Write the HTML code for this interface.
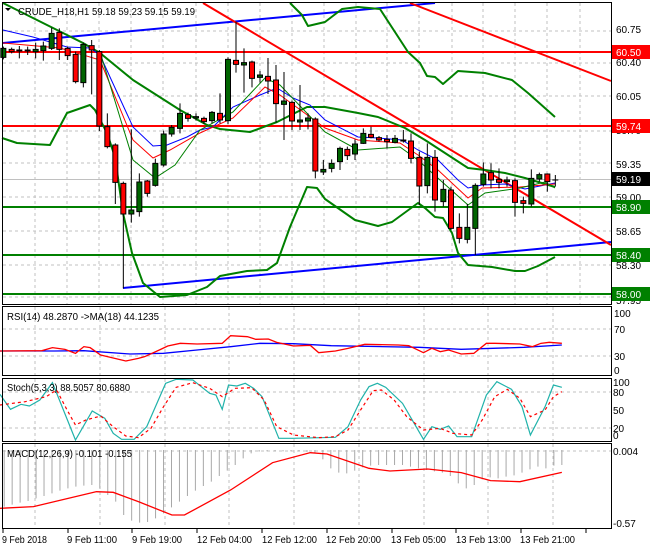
<!DOCTYPE html>
<html><head><meta charset="utf-8"><style>
html,body{margin:0;padding:0;background:#fff;width:650px;height:550px;overflow:hidden}
svg{display:block}
text{font-family:"Liberation Sans",sans-serif;font-size:10px;fill:#000}
.ns{vector-effect:non-scaling-stroke}
</style></head><body>
<svg width="650" height="550" viewBox="0 0 650 550" xmlns="http://www.w3.org/2000/svg">
<rect x="0" y="0" width="650" height="550" fill="#fff"/>
<g stroke="#c0c0c0" stroke-dasharray="3,3" stroke-width="1" fill="none">
<path d="M3 31H611M3 63H611M3 96H611M3 131H611M3 163H611M3 197H611M3 231H611M3 265H611M3 297H611"/>
<path d="M35 3V304M67 3V304M99 3V304M131 3V304M163 3V304M196 3V304M228 3V304M260 3V304M292 3V304M324 3V304M356 3V304M387 3V304M419 3V304M452 3V304M483 3V304M515 3V304M547 3V304M580 3V304"/>
<path d="M3 329H611M3 356H611M3 392H611M3 428H611M3 451H611"/>
<path d="M35 307V376M100 307V376M165 307V376M229 307V376M294 307V376M359 307V376M424 307V376M488 307V376M553 307V376"/>
<path d="M35 379V441M100 379V441M165 379V441M229 379V441M294 379V441M359 379V441M424 379V441M488 379V441M553 379V441"/>
<path d="M35 444V528M100 444V528M165 444V528M229 444V528M294 444V528M359 444V528M424 444V528M488 444V528M553 444V528"/>
</g>
<line x1="3" y1="179.5" x2="611" y2="179.5" stroke="#c0c0c0"/>
<g stroke-width="2" fill="none">
<path d="M3 52H611M3 126H611" stroke="#ff0000"/>
<path d="M3 207H611M3 255H611M3 294H611" stroke="#008000"/>
</g>
<g stroke-width="2" fill="none">
<path d="M3 43L435 3" stroke="#0000ff"/>
<path d="M123 288L611 242" stroke="#0000ff"/>
<path d="M203 3L611 245" stroke="#ff0000"/>
<path d="M410 3L611 81" stroke="#ff0000"/>
</g>
<g stroke="#008000" stroke-width="2" fill="none" stroke-linejoin="round">
<path d="M3 3L43 23L83 43L100 53L133 80L180 110L207 125L220 129L250 132L277 122L307 107L325 107L358 113L378 117L405 128L425 140L468 168L485 170L505 173L525 178L555 187"/>
<path d="M2 138L17 143L50 145L67 113L90 105L95 110L107 133L115 157L123 213L132 253L143 283L160 297L187 295L207 287L220 276L247 271L267 270L277 263L290 227L307 187L317 188L325 199L355 220L378 226L392 222L418 203L425 208L435 217L443 218L452 233L458 253L468 265L492 267L515 271L525 271L538 266L555 257"/>
<path d="M290 3L302 15L308 26L325 22L342 9L358 7L380 9L408 52L420 63L427 76L435 77L443 84L458 71L485 73L512 80L528 93L555 117"/>
</g>
<g fill="none" stroke-width="1">
<path stroke="#0000ff" d="M3 30L33 37L67 47L90 48L100 55L110 77L133 127L153 146L167 145L187 137L200 130L213 127L233 107L260 95L277 88L293 98L310 105L325 120L358 137L378 138L402 140L418 150L438 160L458 180L468 188L482 185L505 184L525 189L555 183"/>
<path stroke="#ff0000" d="M3 43L60 48L100 60L133 140L153 158L170 150L200 133L233 118L265 87L280 95L325 128L358 140L400 143L418 155L438 170L468 198L482 188L520 187L555 184"/>
<path stroke="#008000" d="M100 52L133 160L155 178L175 165L200 130L233 112L265 78L280 85L325 132L358 150L400 147L418 160L440 180L468 205L485 193L520 188L545 182L555 188"/>
</g>
<g transform="scale(0.33333)">
<path class="ns" stroke="#000" stroke-width="1" fill="none" d="M10 140V178M35 143V160M58 138V175M83 140V165M107 128V175M130 125V182M155 83V150M178 85V180M203 140V180M227 155V250M250 128V262M275 120V283M298 150V393M322 340V445M346 430V612M370 545V865M394 388V668M418 520V650M442 540V590M466 476V560M491 392V500M515 375V410M540 310V400M564 338V365M588 340V362M612 350V372M636 333V370M660 280V370M684 172V372M708 65V218M732 145V278M756 182V262M780 213V248M804 174V282M828 195V368M852 216V420M876 302V390M900 255V390M924 340V388M946 352V535M970 480V525"/>
<g stroke="#000" stroke-width="1">
<rect class="ns" x="2.5" y="145" width="15" height="27" fill="#006400"/>
<rect class="ns" x="27.5" y="148" width="15" height="7" fill="#ff0000"/>
<rect class="ns" x="50.5" y="150" width="15" height="3" fill="#006400"/>
<rect class="ns" x="75.5" y="150" width="15" height="3" fill="#006400"/>
<rect class="ns" x="99.5" y="148" width="15" height="7" fill="#006400"/>
<rect class="ns" x="122.5" y="138" width="15" height="14" fill="#006400"/>
<rect class="ns" x="147.5" y="100" width="15" height="45" fill="#006400"/>
<rect class="ns" x="170.5" y="97" width="15" height="51" fill="#ff0000"/>
<rect class="ns" x="195.5" y="145" width="15" height="22" fill="#ff0000"/>
<rect class="ns" x="219.5" y="163" width="15" height="82" fill="#ff0000"/>
<rect class="ns" x="242.5" y="133" width="15" height="115" fill="#006400"/>
<rect class="ns" x="267.5" y="137" width="15" height="13" fill="#ff0000"/>
<rect class="ns" x="290.5" y="155" width="15" height="223" fill="#ff0000"/>
<rect class="ns" x="314.5" y="380" width="15" height="60" fill="#ff0000"/>
<rect class="ns" x="338.5" y="435" width="15" height="112" fill="#ff0000"/>
<rect class="ns" x="362.5" y="550" width="15" height="92" fill="#ff0000"/>
<rect class="ns" x="386.5" y="630" width="15" height="12" fill="#006400"/>
<rect class="ns" x="410.5" y="546" width="15" height="89" fill="#006400"/>
<rect class="ns" x="434.5" y="543" width="15" height="37" fill="#ff0000"/>
<rect class="ns" x="458.5" y="490" width="15" height="66" fill="#006400"/>
<rect class="ns" x="483.5" y="402" width="15" height="93" fill="#006400"/>
<rect class="ns" x="507.5" y="382" width="15" height="20" fill="#006400"/>
<rect class="ns" x="532.5" y="340" width="15" height="45" fill="#006400"/>
<rect class="ns" x="556.5" y="344" width="15" height="11" fill="#ff0000"/>
<rect class="ns" x="580.5" y="350" width="15" height="4" fill="#006400"/>
<rect class="ns" x="604.5" y="355" width="15" height="10" fill="#ff0000"/>
<rect class="ns" x="628.5" y="337" width="15" height="25" fill="#006400"/>
<rect class="ns" x="652.5" y="340" width="15" height="20" fill="#ff0000"/>
<rect class="ns" x="676.5" y="178" width="15" height="184" fill="#006400"/>
<rect class="ns" x="700.5" y="181" width="15" height="12" fill="#ff0000"/>
<rect class="ns" x="724.5" y="188" width="15" height="7" fill="#006400"/>
<rect class="ns" x="748.5" y="186" width="15" height="49" fill="#ff0000"/>
<rect class="ns" x="772.5" y="225" width="15" height="7" fill="#006400"/>
<rect class="ns" x="796.5" y="229" width="15" height="14" fill="#ff0000"/>
<rect class="ns" x="820.5" y="240" width="15" height="71" fill="#ff0000"/>
<rect class="ns" x="844.5" y="303" width="15" height="10" fill="#006400"/>
<rect class="ns" x="868.5" y="307" width="15" height="56" fill="#ff0000"/>
<rect class="ns" x="892.5" y="360" width="15" height="6" fill="#006400"/>
<rect class="ns" x="916.5" y="354" width="15" height="9" fill="#006400"/>
<rect class="ns" x="938.5" y="357" width="15" height="156" fill="#ff0000"/>
<rect class="ns" x="962.5" y="508" width="15" height="8" fill="#006400"/>
</g></g>
<g transform="translate(325,0) scale(0.33333)">
<path class="ns" stroke="#000" stroke-width="1" fill="none" d="M20 478V517M45 440V510M67 440V480M90 418V480M115 385V432M138 380V415M162 408V425M186 405V445M210 405V430M235 390V428M258 400V490M283 455V615M307 430V580M330 450V635M355 540V620M378 560V690M403 640V730M427 612V730M451 550V765M475 487V560M498 490V565M522 505V565M546 530V560M570 535V650M595 590V640M619 508V620M643 518V545M667 520V575M691 525V560M682 540H700"/>
<g stroke="#000" stroke-width="1">
<rect class="ns" x="12.5" y="490" width="15" height="15" fill="#006400"/>
<rect class="ns" x="37.5" y="445" width="15" height="40" fill="#006400"/>
<rect class="ns" x="59.5" y="448" width="15" height="19" fill="#ff0000"/>
<rect class="ns" x="82.5" y="432" width="15" height="30" fill="#006400"/>
<rect class="ns" x="107.5" y="400" width="15" height="30" fill="#006400"/>
<rect class="ns" x="130.5" y="403" width="15" height="9" fill="#ff0000"/>
<rect class="ns" x="154.5" y="413" width="15" height="7" fill="#ff0000"/>
<rect class="ns" x="178.5" y="418" width="15" height="7" fill="#ff0000"/>
<rect class="ns" x="202.5" y="415" width="15" height="12" fill="#006400"/>
<rect class="ns" x="227.5" y="420" width="15" height="3" fill="#006400"/>
<rect class="ns" x="250.5" y="423" width="15" height="52" fill="#ff0000"/>
<rect class="ns" x="275.5" y="472" width="15" height="86" fill="#ff0000"/>
<rect class="ns" x="299.5" y="472" width="15" height="85" fill="#006400"/>
<rect class="ns" x="322.5" y="472" width="15" height="128" fill="#ff0000"/>
<rect class="ns" x="347.5" y="568" width="15" height="37" fill="#006400"/>
<rect class="ns" x="370.5" y="570" width="15" height="115" fill="#ff0000"/>
<rect class="ns" x="395.5" y="682" width="15" height="33" fill="#ff0000"/>
<rect class="ns" x="419.5" y="682" width="15" height="36" fill="#006400"/>
<rect class="ns" x="443.5" y="556" width="15" height="129" fill="#006400"/>
<rect class="ns" x="467.5" y="522" width="15" height="31" fill="#006400"/>
<rect class="ns" x="490.5" y="518" width="15" height="22" fill="#ff0000"/>
<rect class="ns" x="514.5" y="538" width="15" height="9" fill="#ff0000"/>
<rect class="ns" x="538.5" y="540" width="15" height="5" fill="#006400"/>
<rect class="ns" x="562.5" y="542" width="15" height="65" fill="#ff0000"/>
<rect class="ns" x="587.5" y="602" width="15" height="8" fill="#ff0000"/>
<rect class="ns" x="611.5" y="535" width="15" height="77" fill="#006400"/>
<rect class="ns" x="635.5" y="524" width="15" height="13" fill="#006400"/>
<rect class="ns" x="659.5" y="522" width="15" height="23" fill="#ff0000"/>
</g></g>
<!-- indicator panels: x scale 1/2.385, y scale 1/3 -->
<g transform="translate(0,300) scale(0.41929,0.33333)" fill="none">
<path class="ns" stroke="#0000ff" stroke-width="1.3" d="M0 153L130 153L200 152L310 162L390 160L470 150L550 140L620 130L700 131L790 137L1000 142L1100 148L1250 142L1340 135"/>
<path class="ns" stroke="#ff0000" stroke-width="1.3" d="M0 153L100 152L125 143L155 148L180 160L200 140L215 143L240 165L300 183L330 175L345 170L380 150L400 138L430 130L470 132L530 130L550 107L590 110L610 118L640 117L660 127L700 138L740 136L760 158L800 153L830 145L870 133L950 135L975 137L1010 158L1030 145L1050 155L1070 150L1100 162L1130 160L1160 130L1180 130L1240 132L1270 140L1290 130L1310 127L1340 130"/>
<path class="ns" stroke="#20b2aa" stroke-width="1.2" d="M0 283L25 328L50 313L70 318L95 300L125 248L180 420L220 333L250 355L270 400L290 418L320 418L350 380L395 250L420 238L460 240L500 280L515 285L530 328L545 255L565 258L585 250L605 265L625 290L665 415L700 415L800 412L830 380L860 300L880 260L900 250L920 262L960 310L1010 418L1030 380L1050 388L1070 378L1090 410L1125 410L1160 285L1185 245L1220 268L1245 320L1265 405L1300 320L1320 255L1340 262"/>
<path class="ns" stroke="#ff0000" stroke-width="1.2" stroke-dasharray="3,3" d="M0 315L60 305L110 290L135 270L160 330L180 375L205 360L240 348L270 380L300 408L330 413L360 385L390 320L420 262L460 248L500 265L530 290L560 265L600 263L630 300L660 380L700 405L760 413L800 410L830 390L860 330L890 272L910 270L940 300L970 350L1010 390L1050 385L1080 400L1125 405L1150 360L1180 290L1210 268L1240 295L1265 350L1300 330L1320 290L1340 275"/>
<path class="ns" stroke="#a8a8a8" stroke-width="1" d="M10 450V620M29 450V614M48 450V608M67 450V603M86 450V595M105 450V588M124 450V580M143 450V572M162 450V565M181 450V560M200 450V557M219 450V555M238 450V565M257 450V585M276 450V605M295 450V645M314 450V662M333 450V668M352 450V666M371 450V655M390 450V640M409 450V622M428 450V605M447 450V588M466 450V572M485 450V558M504 450V545M523 450V528M542 450V512M561 450V495M580 450V475M599 450V460M618 450V455M637 450V454M656 450V454M675 450V454M694 450V454M713 450V454M732 450V456M751 450V460M770 450V478M789 450V505M808 450V518M827 450V520M846 450V512M865 450V502M884 450V497M903 450V495M922 450V495M941 450V495M960 450V495M979 450V500M998 450V505M1017 450V510M1036 450V514M1055 450V518M1074 450V528M1093 450V550M1112 450V565M1131 450V555M1150 450V538M1169 450V532M1188 450V535M1207 450V530M1226 450V526M1245 450V518M1264 450V508M1283 450V500M1302 450V505M1321 450V497M1340 450V495"/>
<path class="ns" stroke="#ff0000" stroke-width="1.3" d="M0 625L80 620L230 575L270 577L330 605L410 645L440 645L550 570L650 488L740 458L780 462L880 505L930 513L1020 507L1100 518L1170 542L1240 545L1340 517"/>
</g>
<g stroke="#000" stroke-width="1" fill="none">
<rect x="2.5" y="2.5" width="609" height="302"/>
<rect x="2.5" y="306.5" width="609" height="69"/>
<rect x="2.5" y="378.5" width="609" height="63"/>
<rect x="2.5" y="443.5" width="609" height="85"/>
<path d="M3 529V533M68 529V533M132 529V533M197 529V533M262 529V533M327 529V533M392 529V533M456 529V533M521 529V533M586 529V533"/>
</g>
<path d="M5 8L11 8L8 11Z" fill="#000"/>
<text x="18" y="15" textLength="177" lengthAdjust="spacingAndGlyphs" font-size="11">CRUDE_H18,H1  59.18 59.23 59.15 59.19</text>
<text x="7" y="320" textLength="152" lengthAdjust="spacingAndGlyphs">RSI(14) 48.2870  -&gt;MA(18) 44.1235</text>
<text x="7" y="391" textLength="123" lengthAdjust="spacingAndGlyphs">Stoch(5,3,3) 88.5057 80.6880</text>
<text x="7" y="457" textLength="125" lengthAdjust="spacingAndGlyphs">MACD(12,26,9) -0.101 -0.155</text>
<g>
<text x="616" y="33">60.75</text>
<text x="616" y="66">60.40</text>
<text x="616" y="100">60.05</text>
<text x="616" y="168">59.35</text>
<text x="616" y="201">59.00</text>
<text x="616" y="235">58.65</text>
<text x="616" y="269">58.30</text>
<text x="616" y="134">59.70</text>
<text x="616" y="304">57.95</text>
<rect x="612" y="45" width="38" height="14" fill="#ff0000"/><text x="616" y="56" style="fill:#fff">60.50</text>
<rect x="612" y="119" width="38" height="14" fill="#ff0000"/><text x="616" y="130" style="fill:#fff">59.74</text>
<rect x="612" y="172" width="38" height="14" fill="#000"/><text x="616" y="183" style="fill:#fff">59.19</text>
<rect x="612" y="200" width="38" height="14" fill="#008000"/><text x="616" y="211" style="fill:#fff">58.90</text>
<rect x="612" y="248" width="38" height="14" fill="#008000"/><text x="616" y="259" style="fill:#fff">58.40</text>
<rect x="612" y="287" width="38" height="14" fill="#008000"/><text x="616" y="298" style="fill:#fff">58.00</text>
<text x="614" y="317">100</text>
<text x="614" y="333">70</text>
<text x="614" y="360">30</text>
<text x="614" y="374">0</text>
<text x="613" y="386">100</text>
<text x="613" y="396">80</text>
<text x="613" y="414">50</text>
<text x="613" y="432">20</text>
<text x="613" y="439">0</text>
<text x="613" y="455">0.004</text>
<text x="613" y="527">-0.57</text>
</g>
<g>
<text x="2" y="543" textLength="45" lengthAdjust="spacingAndGlyphs">9 Feb 2018</text>
<text x="67" y="543" textLength="50" lengthAdjust="spacingAndGlyphs">9 Feb 11:00</text>
<text x="132" y="543" textLength="50" lengthAdjust="spacingAndGlyphs">9 Feb 19:00</text>
<text x="197" y="543" textLength="55" lengthAdjust="spacingAndGlyphs">12 Feb 04:00</text>
<text x="262" y="543" textLength="55" lengthAdjust="spacingAndGlyphs">12 Feb 12:00</text>
<text x="326" y="543" textLength="55" lengthAdjust="spacingAndGlyphs">12 Feb 20:00</text>
<text x="391" y="543" textLength="55" lengthAdjust="spacingAndGlyphs">13 Feb 05:00</text>
<text x="456" y="543" textLength="55" lengthAdjust="spacingAndGlyphs">13 Feb 13:00</text>
<text x="520" y="543" textLength="55" lengthAdjust="spacingAndGlyphs">13 Feb 21:00</text>
</g>
</svg>
</body></html>
